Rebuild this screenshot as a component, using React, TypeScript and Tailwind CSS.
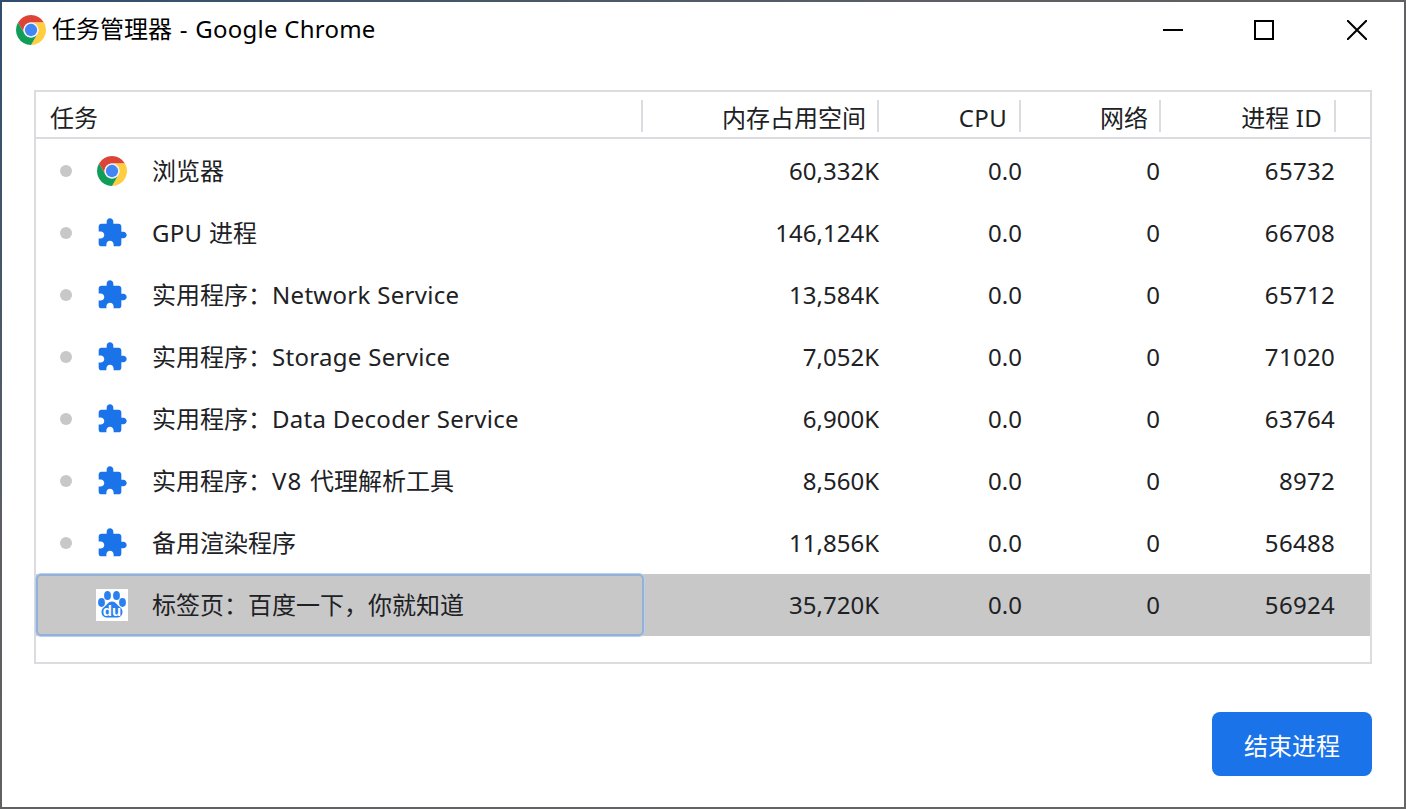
import React from "react";

const rows: { kind: "chrome" | "ext" | "baidu"; name: string; mem: string; cpu: string; net: string; pid: string }[] = [
  { kind: "chrome", name: "浏览器", mem: "60,332K", cpu: "0.0", net: "0", pid: "65732" },
  { kind: "ext", name: "GPU 进程", mem: "146,124K", cpu: "0.0", net: "0", pid: "66708" },
  { kind: "ext", name: "实用程序：Network Service", mem: "13,584K", cpu: "0.0", net: "0", pid: "65712" },
  { kind: "ext", name: "实用程序：Storage Service", mem: "7,052K", cpu: "0.0", net: "0", pid: "71020" },
  { kind: "ext", name: "实用程序：Data Decoder Service", mem: "6,900K", cpu: "0.0", net: "0", pid: "63764" },
  { kind: "ext", name: "实用程序：V8 代理解析工具", mem: "8,560K", cpu: "0.0", net: "0", pid: "8972" },
  { kind: "ext", name: "备用渲染程序", mem: "11,856K", cpu: "0.0", net: "0", pid: "56488" },
  { kind: "baidu", name: "标签页：百度一下，你就知道", mem: "35,720K", cpu: "0.0", net: "0", pid: "56924" },
];

function Mixed({ text }: { text: string }) {
  return (
    <>
      {text.split(/([A-Za-z0-9 \-]+)/).map((part, i) =>
        part.startsWith("V8") ? (
          <span key={i} className="tracking-[1.2px]">
            {part}
          </span>
        ) : /[A-Za-z0-9]/.test(part) || part === " " ? (
          <span key={i} className="tracking-[0.3px]">
            {part}
          </span>
        ) : (
          <span key={i}>{part}</span>
        )
      )}
    </>
  );
}

function ChromeLogo({ className }: { className: string }) {
  return (
    <svg viewBox="2 2 44 44" className={className}>
      <path d="M4.95 13A22 22 0 0 1 43.05 13H24A11 11 0 0 0 14.47 29.5Z" fill="#db4437" />
      <path d="M43.05 13A22 22 0 0 1 24 46L33.53 29.5A11 11 0 0 0 24 13Z" fill="#ffcd40" />
      <path d="M24 46A22 22 0 0 1 4.95 13L14.47 29.5A11 11 0 0 0 33.53 29.5Z" fill="#0f9d58" />
      <circle cx="24" cy="24" r="11" fill="#f1f1f1" />
      <circle cx="24" cy="24" r="9" fill="#4285f4" />
    </svg>
  );
}

function Puzzle() {
  return (
    <svg viewBox="0 0 24 24" className="w-[32px] h-[32px]" fill="#1a73e8">
      <path d="M20.5 11H19V7c0-1.1-.9-2-2-2h-4V3.5C13 2.12 11.88 1 10.5 1S8 2.12 8 3.5V5H4c-1.1 0-1.99.9-1.99 2v3.8H3.5c1.49 0 2.7 1.21 2.7 2.7s-1.21 2.7-2.7 2.7H2V20c0 1.1.9 2 2 2h3.8v-1.5c0-1.49 1.21-2.7 2.7-2.7 1.49 0 2.7 1.21 2.7 2.7V22H17c1.1 0 2-.9 2-2v-4h1.5c1.38 0 2.5-1.12 2.5-2.5S21.88 11 20.5 11z" />
    </svg>
  );
}

function Baidu() {
  return (
    <svg viewBox="0 0 32 32" className="w-[32px] h-[32px] bg-white">
      <g fill="#2b7ff0">
        <ellipse cx="11.5" cy="6.5" rx="3.4" ry="4.6" />
        <ellipse cx="20.5" cy="6.5" rx="3.4" ry="4.6" />
        <ellipse cx="5.5" cy="13.5" rx="3.4" ry="4.4" />
        <ellipse cx="26.5" cy="13.5" rx="3.4" ry="4.4" />
        <path d="M16 12.500c3.500 0 4.500 3 7.500 5.200 2.500 1.800 3 3.600 3 5.300 0 3.800-3 5.500-5.500 5.500H11c-2.500 0-5.500-1.700-5.500-5.500 0-1.700.5-3.500 3-5.300 3-2.200 4-5.200 7.500-5.200z" />
      </g>
      <text x="16" y="26.500" textAnchor="middle" fontSize="15" fontWeight="700" fill="#fff" fontFamily="'Liberation Sans', sans-serif">du</text>
    </svg>
  );
}

function HeadCell({ w, label, left, pad = "pr-[12px]" }: { w: string; label: string; left?: boolean; pad?: string }) {
  return (
    <div className={`${w} mt-[8px] h-[32px] border-r-2 border-[#dcdce0] flex items-center ${left ? "pl-[14px]" : `justify-end ${pad}`}`}>
      <span className="relative top-[2px]">
        <Mixed text={label} />
      </span>
    </div>
  );
}

export default function App() {
  return (
    <div
      className="w-[1406px] h-[809px] overflow-hidden p-[2px] bg-gradient-to-br from-[#2f4d6e] via-[#5f5f63] via-[35%] to-[#666666] text-[24px] leading-[32px] text-[#202124]"
      style={{ fontFamily: "'Noto Sans', 'Noto Sans CJK SC', sans-serif" }}
    >
      <div className="w-full h-full bg-white flex flex-col">
        <div className="h-[56px] flex items-center shrink-0">
          <ChromeLogo className="w-[30px] h-[30px] ml-[14px]" />
          <span className="ml-[6px] text-black relative -top-[1px]">
            任务管理器<span className="px-[1.5px]"> - </span>
            <span className="tracking-[0.25px]">Google Chrome</span>
          </span>
          <div className="ml-auto flex items-center h-full">
            <svg viewBox="0 0 20 20" className="w-[20px] h-[20px] mr-[71px]" fill="none" stroke="#000" strokeWidth="2">
              <path d="M0 10H20" />
            </svg>
            <svg viewBox="0 0 20 20" className="w-[20px] h-[20px] mr-[73px]" fill="none" stroke="#000" strokeWidth="2">
              <rect x="1" y="1" width="18" height="18" />
            </svg>
            <svg viewBox="0 0 20 20" className="w-[20px] h-[20px] mr-[37px]" fill="none" stroke="#000" strokeWidth="2">
              <path d="M0 0L20 20M20 0L0 20" />
            </svg>
          </div>
        </div>

        <div className="mt-[32px] ml-[32px] w-[1338px] h-[574px] border-2 border-[#dcdce0] flex flex-col shrink-0">
          <div className="h-[47px] flex border-b-2 border-[#dcdce0] shrink-0">
            <HeadCell w="w-[607px]" label="任务" left />
            <HeadCell w="w-[236px]" label="内存占用空间" pad="pr-[11px]" />
            <HeadCell w="w-[142px]" label="CPU" />
            <HeadCell w="w-[140px]" label="网络" pad="pr-[11px]" />
            <HeadCell w="w-[175px]" label="进程 ID" />
          </div>
          <div className="pt-[1px]">
            {rows.map((r, i) => {
              const sel = r.kind === "baidu";
              return (
                <div key={i} className={`h-[62px] flex items-center ${sel ? "bg-[#c8c8c8]" : ""}`}>
                  <div
                    className={`w-[608px] h-full flex items-center shrink-0 ${
                      sel ? "rounded-[5px] border-2 border-[#94b2d8] shadow-[0_0_0_1px_#b5d0f0] pl-[58px]" : "pl-[24px]"
                    }`}
                  >
                    {sel ? null : <span className="w-[12px] h-[12px] rounded-full bg-[#c8c8c8] mr-[24px] shrink-0" />}
                    <div className="w-[32px] h-[32px] flex items-center justify-center shrink-0">
                      {r.kind === "chrome" ? (
                        <ChromeLogo className="w-[30px] h-[30px]" />
                      ) : r.kind === "ext" ? (
                        <Puzzle />
                      ) : (
                        <Baidu />
                      )}
                    </div>
                    <span className="ml-[24px] whitespace-nowrap">
                      <Mixed text={r.name} />
                    </span>
                  </div>
                  <div className="w-[235px] text-right">{r.mem}</div>
                  <div className="w-[143px] text-right">{r.cpu}</div>
                  <div className="w-[138px] text-right">{r.net}</div>
                  <div className="w-[175px] text-right tracking-[0.3px]">{r.pid}</div>
                </div>
              );
            })}
          </div>
        </div>

        <div className="mt-[48px] mr-[32px] flex justify-end shrink-0">
          <button className="w-[160px] h-[64px] rounded-[8px] bg-[#1a73e8] text-white">
            <span className="relative top-[2px]">结束进程</span>
          </button>
        </div>
      </div>
    </div>
  );
}
